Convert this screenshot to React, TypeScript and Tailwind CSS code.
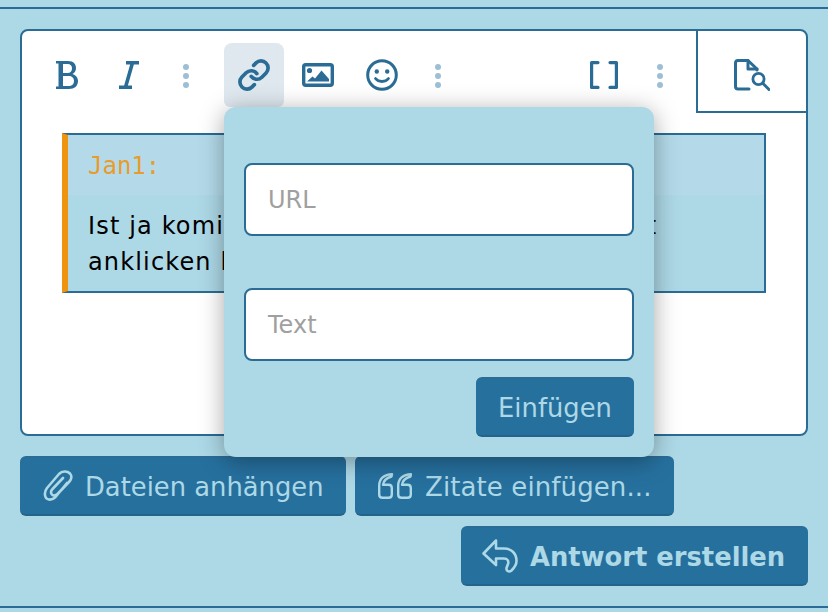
import { Link } from 'lucide-react';

function Dots() {
  return (
    <div className="flex flex-col items-center gap-[3px] pt-[1px]">
      <span className="h-[6px] w-[6px] rounded-full bg-[#9dbfd5]" />
      <span className="h-[6px] w-[6px] rounded-full bg-[#9dbfd5]" />
      <span className="h-[6px] w-[6px] rounded-full bg-[#9dbfd5]" />
    </div>
  );
}

function BoldIcon() {
  return (
    <svg width="22" height="28" viewBox="0 0 22 28" fill="#2a6c95">
      <path
        fillRule="evenodd"
        d="M0 0H12C18 0 20 3.5 20 7C20 10 18.5 12 16.5 13C19.5 14 22 16.5 22 20C22 25 18.5 28 13 28H0V25.5H2.5V2.5H0ZM7 3V12H11.5C14.5 12 16 10 16 7.4C16 4.8 14.5 3 11.5 3ZM7 15V25H12.5C16 25 18 23 18 20C18 17 16 15 12.5 15Z"
      />
    </svg>
  );
}

function ItalicIcon() {
  return (
    <svg width="20" height="28" viewBox="0 0 20 28" fill="none" stroke="#2a6c95" strokeWidth="3.6">
      <path d="M7 1.8H20M0 26.2H13M13.5 1.8L6.5 26.2" />
    </svg>
  );
}

function ImageIcon() {
  return (
    <svg width="32" height="24" viewBox="0 0 32 24" fill="none">
      <rect x="1.7" y="1.7" width="28.6" height="20.6" rx="2" stroke="#2a6c95" strokeWidth="3.4" />
      <circle cx="7.5" cy="7.5" r="2.6" fill="#2a6c95" />
      <path d="M5 18.5L10.5 13.5L13 15.5L19.5 7.5L27 16V18.5Z" fill="#2a6c95" />
    </svg>
  );
}

function SmileIcon() {
  return (
    <svg width="32" height="32" viewBox="0 0 32 32" fill="none">
      <circle cx="16" cy="16" r="14.3" stroke="#2a6c95" strokeWidth="3" />
      <circle cx="10.8" cy="12.5" r="2.2" fill="#2a6c95" />
      <circle cx="21.2" cy="12.5" r="2.2" fill="#2a6c95" />
      <path d="M9.5 19.5C12.5 23.5 19.5 23.5 22.5 19.5" stroke="#2a6c95" strokeWidth="2.8" strokeLinecap="round" />
    </svg>
  );
}

function BracketsIcon() {
  return (
    <svg width="28" height="28" viewBox="0 0 28 28" fill="none" stroke="#2a6c95" strokeWidth="3.2" strokeLinecap="round" strokeLinejoin="round">
      <path d="M8 1.6H1.6V26.4H8M20 1.6H26.4V26.4H20" />
    </svg>
  );
}

function PreviewIcon() {
  return (
    <svg width="36" height="32" viewBox="0 0 36 32" fill="none" stroke="#2a6c95" strokeWidth="3" strokeLinecap="round" strokeLinejoin="round">
      <path d="M15 30H4A2.6 2.6 0 0 1 1.5 27.4V4A2.6 2.6 0 0 1 4 1.5H14L23 10V11" />
      <path d="M14 1.5V10H23" />
      <circle cx="24.5" cy="20" r="5.6" strokeWidth="2.8" />
      <path d="M29 24.5L35 30.5" />
    </svg>
  );
}

function ClipIcon() {
  return (
    <svg width="30" height="32" viewBox="0 0 30 32" fill="none" stroke="#add8e6" strokeWidth="2.6" strokeLinecap="round" strokeLinejoin="round">
      <path d="M24 13L12.5 27C8.5 31 2.5 30.5 2 25C1.5 22 2.5 20 4 18L16 4C19 1 24 .5 27 3.5C29.5 6.5 28 10 26 12L14.5 24C12.5 26 9.5 26 8.5 24C7.5 22 8 20.5 9.5 19L20 8" />
    </svg>
  );
}

function QuoteIcon() {
  const glyph = 'C6 1.2 1.2 6 1.2 12.5V21.5C1.2 23.5 2.5 24.8 4.5 24.8H10.5C12.5 24.8 13.8 23.5 13.8 21.5V15C13.8 13 12.5 11.8 10.5 11.8H5C5.5 8 8.5 5 13.5 3.5Z';
  return (
    <svg width="34" height="26" viewBox="0 0 34 26" fill="none" stroke="#add8e6" strokeWidth="2.4" strokeLinecap="round" strokeLinejoin="round">
      <path d={`M14 1.2${glyph}`} />
      <path transform="translate(19 0)" d={`M14 1.2${glyph}`} />
    </svg>
  );
}

function ReplyIcon() {
  return (
    <svg width="36" height="34" viewBox="0 0 36 34" fill="none" stroke="#add8e6" strokeWidth="2.6" strokeLinecap="round" strokeLinejoin="round">
      <path d="M14 1.5L1.5 14.5L14 26V19.5H22C25.5 19.5 27 22 26 25L24.5 29C24 32 27 33.5 29.5 31.5C32.5 28.5 34.5 26 34.5 22C34.5 14 29 9.5 22 9.5H14Z" />
    </svg>
  );
}

function ActionButton({ className = '', children }: { className?: string; children: React.ReactNode }) {
  return (
    <button className={`flex h-[60px] items-center rounded-[6px] border-y-2 border-t-[#2a6c97] border-b-[#24648c] bg-[#26709e] text-[#add8e6] ${className}`}>
      {children}
    </button>
  );
}

function TextInput({ placeholder }: { placeholder: string }) {
  return (
    <div className="flex h-[73px] items-center rounded-[8px] border-2 border-[#2a6c95] bg-white pl-[22px] text-[24px] text-[#a0a0a0]">
      {placeholder}
    </div>
  );
}

export default function App() {
  return (
    <div className='h-[612px] w-[828px] overflow-hidden bg-[#add8e6] pt-[7px] font-["DejaVu_Sans",sans-serif]'>
      <div className="h-[2px] bg-[#2a6c95]" />
      <div className="relative mx-5 mt-5 h-[407px] rounded-[8px] border-2 border-[#2a6c95] bg-white">
        <div className="flex h-[82px] items-start">
          <div className="ml-[15px] mt-[12px] flex h-[64px] w-[60px] items-center justify-center"><BoldIcon /></div>
          <div className="mt-[12px] flex h-[64px] w-[64px] items-center justify-center"><ItalicIcon /></div>
          <div className="mt-[12px] flex h-[64px] w-[50px] items-center justify-center"><Dots /></div>
          <div className="ml-[13px] mt-[12px] flex h-[64px] w-[60px] items-center justify-center rounded-t-[8px] rounded-b-[6px] bg-[#dfe8ef]">
            <Link size={34} strokeWidth={2.6} color="#2a6c95" />
          </div>
          <div className="ml-[2px] mt-[12px] flex h-[64px] w-[64px] items-center justify-center"><ImageIcon /></div>
          <div className="mt-[12px] flex h-[64px] w-[64px] items-center justify-center"><SmileIcon /></div>
          <div className="mt-[12px] flex h-[64px] w-[48px] items-center justify-center"><Dots /></div>
          <div className="ml-[112px] mt-[12px] flex h-[64px] w-[60px] items-center justify-center"><BracketsIcon /></div>
          <div className="mt-[12px] flex h-[64px] w-[52px] items-center justify-center"><Dots /></div>
          <div className="ml-auto flex h-[82px] w-[110px] items-center justify-center border-b-2 border-l-2 border-[#2a6c95] pt-[8px]">
            <PreviewIcon />
          </div>
        </div>

        <div className="mx-[40px] mt-[20px] h-[160px] border-2 border-l-[6px] border-[#2a6c95] border-l-[#ee9410] bg-[#add8e6]">
          <div className="flex h-[60px] items-center bg-[#b4dae9] pl-[20px] pt-[2px] font-['DejaVu_Sans_Mono',monospace] text-[24px] text-[#e89c2c]">
            Jan1:
          </div>
          <div className="whitespace-nowrap pl-[20px] pt-[13px] text-[24px] leading-[36px] tracking-[1.15px] text-black">
            <div>Ist ja komisch, dass man den Link gar nicht</div>
            <div>anklicken kann.</div>
          </div>
        </div>

        <div className="absolute left-[202px] top-[76px] h-[350px] w-[430px] rounded-[12px] bg-[#add8e6] px-[20px] pt-[56px] shadow-[0_4px_24px_rgba(0,0,0,0.35)]">
          <TextInput placeholder="URL" />
          <div className="mt-[52px]">
            <TextInput placeholder="Text" />
          </div>
          <div className="mt-[16px] flex justify-end">
            <ActionButton className="w-[158px] justify-center pt-[2px] text-[25.8px]">Einfügen</ActionButton>
          </div>
        </div>
      </div>

      <div className="mx-5 mt-5 flex gap-[9px]">
        <ActionButton className="w-[326px] gap-[12px] pl-[23px] text-[25.8px]">
          <ClipIcon />
          <span className="pt-[2px]">Dateien anhängen</span>
        </ActionButton>
        <ActionButton className="w-[319px] gap-[13px] pl-[23px] text-[26px]">
          <QuoteIcon />
          <span className="pt-[2px] tracking-[0.1px]">Zitate einfügen...</span>
        </ActionButton>
      </div>
      <div className="mx-5 mt-[10px] flex justify-end">
        <ActionButton className="w-[347px] gap-[12px] pl-[21px] text-[25.8px] font-bold">
          <ReplyIcon />
          <span className="pt-[2px]">Antwort erstellen</span>
        </ActionButton>
      </div>
      <div className="mt-[20px] h-[2px] bg-[#2a6c95]" />
    </div>
  );
}
